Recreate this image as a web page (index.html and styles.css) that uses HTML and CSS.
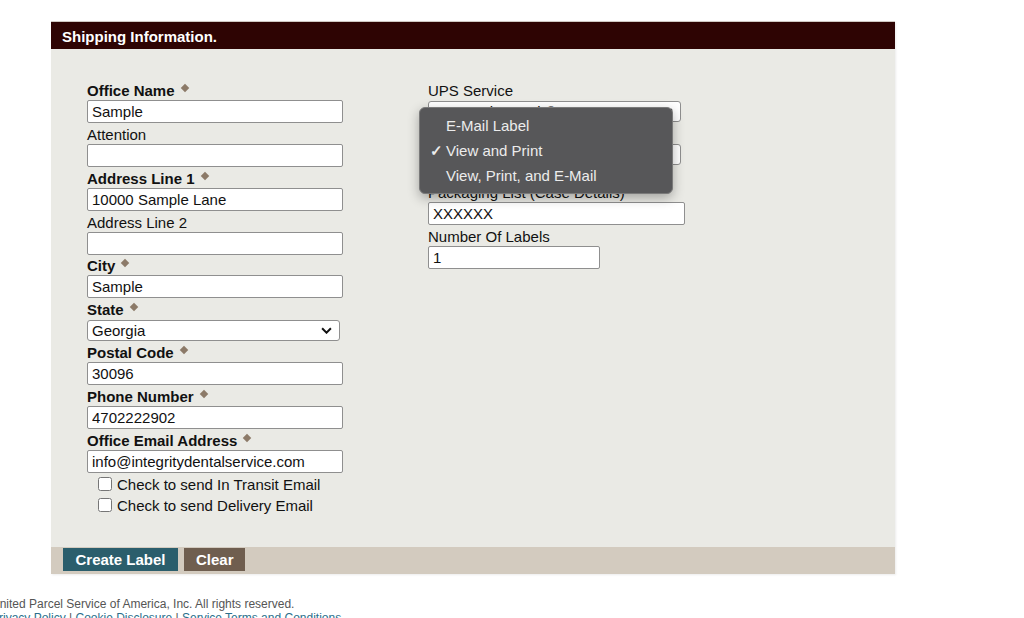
FILE: index.html
```html
<!DOCTYPE html>
<html lang="en">
  <head>
    <meta charset="UTF-8" />
    <title>Shipping Information</title>
    <link rel="stylesheet" href="styles.css">
  </head>
  <body>
    <div class="panel">
      <div class="panel-head">Shipping Information.</div>

      <div class="panel-body">
        <!-- left: ship-to office -->
        <div class="col col-left">
          <label class="lbl req">Office Name<i class="dia"></i></label>
          <input class="txt" type="text" value="Sample" />
          <label class="lbl">Attention</label>
          <input class="txt" type="text" value="" />
          <label class="lbl req">Address Line 1<i class="dia"></i></label>
          <input class="txt" type="text" value="10000 Sample Lane" />
          <label class="lbl">Address Line 2</label>
          <input class="txt" type="text" value="" />
          <label class="lbl req">City<i class="dia"></i></label>
          <input class="txt" type="text" value="Sample" />
          <label class="lbl req">State<i class="dia"></i></label>
          <div class="sel sel-state">
            <select>
              <option>Georgia</option>
            </select>
            <svg class="chev" viewBox="0 0 10 6" width="11" height="7"><path d="M1 1l4 4 4-4" fill="none" stroke="#111" stroke-width="1.8"/></svg>
          </div>
          <label class="lbl req">Postal Code<i class="dia"></i></label>
          <input class="txt" type="text" value="30096" />
          <label class="lbl req">Phone Number<i class="dia"></i></label>
          <input class="txt" type="text" value="4702222902" />
          <label class="lbl req">Office Email Address<i class="dia"></i></label>
          <input class="txt" type="text" value="info@integritydentalservice.com" />

          <div class="checks">
            <label class="chk"><input type="checkbox" /> Check to send In Transit Email</label>
            <label class="chk"><input type="checkbox" /> Check to send Delivery Email</label>
          </div>
        </div>

        <!-- right: service options -->
        <div class="col col-right">
          <label class="lbl">UPS Service</label>
          <div class="sel sel-svc">
            <select>
              <option>UPS 2nd Day Air®</option>
            </select>
            <svg class="chev" viewBox="0 0 10 6" width="11" height="7"><path d="M1 1l4 4 4-4" fill="none" stroke="#111" stroke-width="1.8"/></svg>
          </div>
          <label class="lbl">Label Delivery</label>
          <div class="sel sel-svc sel-gap">
            <select>
              <option>View and Print</option>
            </select>
            <svg class="chev" viewBox="0 0 10 6" width="11" height="7"><path d="M1 1l4 4 4-4" fill="none" stroke="#111" stroke-width="1.8"/></svg>
          </div>
          <label class="lbl">Packaging List (Case Details)</label>
          <input class="txt txt-pack" type="text" value="XXXXXX" />
          <label class="lbl">Number Of Labels</label>
          <input class="txt txt-num" type="text" value="1" />

          <!-- open popup of the label delivery select -->
          <ul class="popup">
            <li>E-Mail Label</li>
            <li class="on">View and Print</li>
            <li>View, Print, and E-Mail</li>
          </ul>
        </div>
      </div>

      <div class="panel-foot">
        <button class="btn btn-go">Create Label</button>
        <button class="btn btn-clear">Clear</button>
      </div>
    </div>

    <div class="legal">
      <p>United Parcel Service of America, Inc. All rights reserved.</p>
      <p class="links"><a href="#">Privacy Policy</a> | <a href="#">Cookie Disclosure</a> | <a href="#">Service Terms and Conditions</a></p>
    </div>
  </body>
</html>
```

FILE: styles.css
```css
body {
  margin: 0;
  padding: 0;
  background-color: #fff;
  font-family: "Liberation Sans", Arial, Helvetica, sans-serif;
  color: #111;
  overflow: hidden;
}

.panel {
  width: 844px;
  margin: 21px 0 0 51px;
  border-top: 1px solid #cfc9c2;
  box-shadow: 1px 1px 2px rgba(0, 0, 0, 0.08);
}

.panel-head {
  background-color: #2e0403;
  color: #fff;
  font-weight: bold;
  font-size: 15px;
  height: 27px;
  line-height: 30px;
  padding-left: 11px;
}

.panel-body {
  background-color: #eaeae5;
  height: 498px;
  box-sizing: border-box;
  padding: 33px 0 0 36px;
  display: flex;
}

.col {
  display: flex;
  flex-direction: column;
  align-items: flex-start;
}

.col-left {
  width: 341px;
}

.col-right {
  position: relative;
  flex: 1;
}

.lbl {
  font-size: 15px;
  line-height: 18px;
  height: 18px;
}

.lbl.req {
  font-weight: bold;
}

/* little brown diamond after required fields */
.dia {
  display: inline-block;
  width: 6px;
  height: 6px;
  background-color: #8c7a68;
  transform: rotate(45deg);
  margin-left: 7px;
  vertical-align: 5px;
}

.txt {
  box-sizing: border-box;
  width: 256px;
  height: 23px;
  margin: 0 0 2.85px 0;
  padding: 0 4px;
  border: 1px solid #8f8f8f;
  border-radius: 2px;
  background: #fff;
  font-family: inherit;
  font-size: 15px;
  color: #111;
}

.txt-pack {
  width: 257px;
}

.txt-num {
  width: 172px;
}

.sel {
  position: relative;
  margin-bottom: 2.85px;
}

.sel select {
  appearance: none;
  -webkit-appearance: none;
  box-sizing: border-box;
  height: 21px;
  border: 1px solid #8f8f8f;
  border-radius: 3px;
  background: #fff;
  font-family: inherit;
  font-size: 15px;
  color: #111;
  padding: 0 4px;
  margin: 1px 0 0 0;
}

.sel-state select {
  width: 253px;
}

.sel-svc select {
  width: 253px;
}

.sel-gap {
  margin-bottom: 19px;
}

.chev {
  position: absolute;
  right: 8px;
  top: 8px;
}

.checks {
  margin: -2px 0 0 11px;
}

.chk {
  display: flex;
  align-items: center;
  font-size: 15px;
  height: 21px;
}

.chk input {
  width: 14px;
  height: 14px;
  margin: 0 5px 0 0;
}

/* native-looking option list, opened */
.popup {
  position: absolute;
  left: -9px;
  top: 25px;
  width: 254px;
  box-sizing: border-box;
  margin: 0;
  padding: 5px 0;
  list-style: none;
  background-color: #575759;
  border: 1px solid #7a7a7a;
  border-radius: 6px;
  box-shadow: 0 4px 12px rgba(0, 0, 0, 0.3);
}

.popup li {
  position: relative;
  color: #ececec;
  font-size: 15px;
  line-height: 25px;
  padding-left: 26px;
}

.popup li.on::before {
  content: "\2713";
  position: absolute;
  left: 10px;
  font-weight: bold;
}

.panel-foot {
  background-color: #d3cbbf;
  height: 27px;
  padding: 1px 0 0 12px;
  box-sizing: border-box;
  display: flex;
  gap: 6px;
}

.btn {
  height: 23px;
  border: 0;
  color: #fff;
  font-family: inherit;
  font-weight: bold;
  font-size: 15px;
  padding: 0 12px;
  cursor: pointer;
}

.btn-go {
  background-color: #2b5e6c;
  width: 115px;
}

.btn-clear {
  background-color: #6f5e4f;
  width: 61px;
}

.legal {
  margin: 23px 0 0 -9px;
  font-size: 12px;
  color: #555;
}

.legal p {
  margin: 0;
  line-height: 14px;
}

.legal a {
  color: #2a6f8c;
  text-decoration: none;
}
```
